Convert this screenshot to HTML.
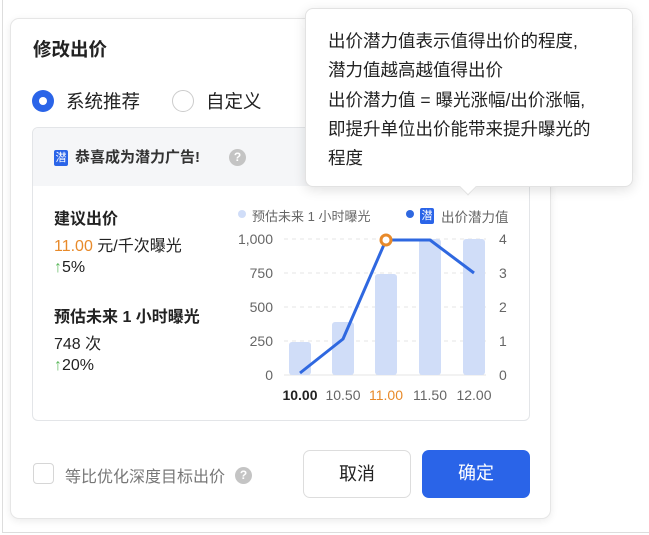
<!DOCTYPE html>
<html><head><meta charset="utf-8"><style>
*{margin:0;padding:0;box-sizing:border-box}
body{width:649px;height:535px;background:#fff;font-family:"Liberation Sans","Noto Sans CJK SC",sans-serif;position:relative;overflow:hidden;color:#222}
.abs{position:absolute;white-space:nowrap}
.frame{position:absolute;left:2px;top:-2px;width:660px;height:535px;border-left:1px solid #ddd;border-bottom:1px solid #ddd}
.card{position:absolute;left:10px;top:18px;width:541px;height:501px;border:1px solid #e6e6e6;border-radius:9px;background:#fff;box-shadow:0 2px 8px rgba(0,0,0,.08)}
.panel{position:absolute;left:32px;top:127px;width:498px;height:294px;border:1px solid #e3e5e8;border-radius:6px;overflow:hidden}
.ph{height:58px;background:#f5f6f8}
.badge{display:inline-block;background:#2a64e8;color:#fff;font-size:11px;width:14px;height:16px;line-height:16px;text-align:center;border-radius:2px}
.q{display:inline-block;width:17px;height:17px;border-radius:50%;background:#c4c4c4;color:#fff;font-size:12px;font-weight:bold;text-align:center;line-height:17px}
.tip{position:absolute;left:305px;top:8px;width:328px;height:179px;background:#fff;border:1px solid #e2e2e2;border-radius:8px;box-shadow:0 3px 12px rgba(0,0,0,.12)}
.tip p{position:absolute;left:22px;font-size:17.5px;color:#222;white-space:nowrap}
.btn{position:absolute;top:450px;width:108px;height:48px;border-radius:7px;font-size:18px;text-align:center;line-height:46px}
.st{font-size:16px}
</style></head><body>
<div class="frame"></div>
<div class="card"></div>
<div class="abs" style="left:33px;top:36px;font-size:18.5px;font-weight:bold">修改出价</div>
<div class="abs" style="left:32px;top:90px;width:22px;height:22px;border-radius:50%;background:#2a64e8"></div>
<div class="abs" style="left:39px;top:97px;width:8px;height:8px;border-radius:50%;background:#fff"></div>
<div class="abs" style="left:66px;top:88px;font-size:18.5px">系统推荐</div>
<div class="abs" style="left:172px;top:90px;width:22px;height:22px;border-radius:50%;border:1px solid #ccc"></div>
<div class="abs" style="left:206px;top:88px;font-size:18.5px">自定义</div>
<div class="panel"><div class="ph"></div></div>
<div class="abs" style="left:54px;top:148px"><span class="badge">潜</span></div>
<div class="abs" style="left:75px;top:146px;font-size:15px;font-weight:bold;color:#333">恭喜成为潜力广告!</div>
<div class="abs" style="left:229px;top:148px"><span class="q">?</span></div>

<div class="abs st" style="left:54px;top:205px;font-weight:bold">建议出价</div>
<div class="abs st" style="left:54px;top:232px"><span style="color:#e88a2a">11.00</span> 元/千次曝光</div>
<div class="abs st" style="left:54px;top:259px"><span style="color:#5cb85c">↑</span>5%</div>
<div class="abs st" style="left:54px;top:303px;font-weight:bold">预估未来 1 小时曝光</div>
<div class="abs st" style="left:54px;top:330px">748 次</div>
<div class="abs st" style="left:54px;top:357px"><span style="color:#5cb85c">↑</span>20%</div>

<svg class="abs" style="left:0;top:0" width="649" height="535">
<g stroke="#e6e6e6" stroke-dasharray="4 4">
<line x1="284" y1="239" x2="486" y2="239"/><line x1="284" y1="273" x2="486" y2="273"/><line x1="284" y1="307" x2="486" y2="307"/><line x1="284" y1="341" x2="486" y2="341"/></g>
<line x1="284" y1="375" x2="486" y2="375" stroke="#e6e6e6"/>
<g fill="#d0ddf8">
<rect x="289" y="342" width="22" height="33" rx="3"/><rect x="332" y="322" width="22" height="53" rx="3"/><rect x="375" y="274" width="22" height="101" rx="3"/><rect x="419" y="239" width="22" height="136" rx="3"/><rect x="463" y="239" width="22" height="136" rx="3"/></g>
<polyline points="300,373 343,339 386,240 430,240 474,273" fill="none" stroke="#2f68e0" stroke-width="3" stroke-linejoin="round"/>
<circle cx="386" cy="240" r="5" fill="#fff" stroke="#e88a2a" stroke-width="3"/>
<g font-size="14" fill="#666" text-anchor="end" font-family="Liberation Sans,sans-serif">
<text x="273" y="244">1,000</text><text x="273" y="278">750</text><text x="273" y="312">500</text><text x="273" y="346">250</text><text x="273" y="380">0</text></g>
<g font-size="14" fill="#666" font-family="Liberation Sans,sans-serif">
<text x="499" y="244">4</text><text x="499" y="278">3</text><text x="499" y="312">2</text><text x="499" y="346">1</text><text x="499" y="380">0</text></g>
<g font-size="14" text-anchor="middle" fill="#666" font-family="Liberation Sans,sans-serif">
<text x="300" y="400" fill="#222" font-weight="bold">10.00</text><text x="343" y="400">10.50</text><text x="386" y="400" fill="#e88a2a">11.00</text><text x="430" y="400">11.50</text><text x="474" y="400">12.00</text></g>
<circle cx="242" cy="214" r="4" fill="#d0ddf8"/>
<circle cx="410" cy="214" r="4" fill="#2f68e0"/>
</svg>
<div class="abs" style="left:252px;top:206px;font-size:13px;color:#666">预估未来 1 小时曝光</div>
<div class="abs" style="left:420px;top:206px"><span class="badge">潜</span></div>
<div class="abs" style="left:441px;top:206px;font-size:13.5px;color:#666">出价潜力值</div>

<div class="abs" style="left:33px;top:463px;width:21px;height:21px;border:1px solid #d6d6d6;border-radius:4px"></div>
<div class="abs" style="left:65px;top:463px;font-size:16px;color:#777">等比优化深度目标出价</div>
<div class="abs" style="left:235px;top:466px"><span class="q">?</span></div>
<div class="btn" style="left:303px;border:1px solid #ddd;color:#222">取消</div>
<div class="btn" style="left:422px;background:#2a64e8;color:#fff">确定</div>

<div class="tip">
<p style="top:19px">出价潜力值表示值得出价的程度,</p>
<p style="top:48px">潜力值越高越值得出价</p>
<p style="top:78px">出价潜力值 = 曝光涨幅/出价涨幅,</p>
<p style="top:107px">即提升单位出价能带来提升曝光的</p>
<p style="top:136px">程度</p>
</div>
<div class="abs" style="left:462px;top:181px;width:12px;height:12px;background:#fff;transform:rotate(45deg);border-right:1px solid #e2e2e2;border-bottom:1px solid #e2e2e2"></div>
</body></html>
